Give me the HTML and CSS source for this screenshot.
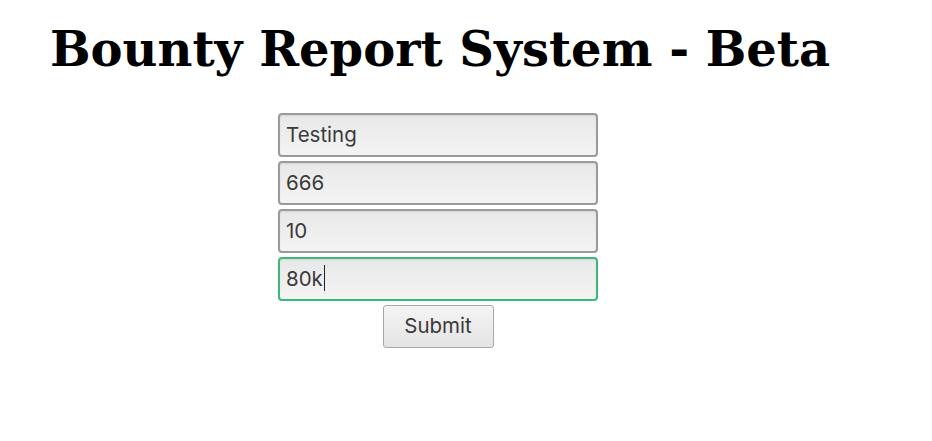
FILE: index.html
```html
<!DOCTYPE html>
<html>
<head>
<meta charset="utf-8">
<title>Bounty Report System - Beta</title>
<link rel="stylesheet" href="styles.css">
</head>
<body>
<h1 class="title">Bounty Report System - Beta</h1>
<form class="form">
  <div class="field">Testing</div>
  <div class="field">666</div>
  <div class="field">10</div>
  <div class="field focused">80k<span class="caret"></span></div>
  <div class="button">Submit</div>
</form>
</body>
</html>
```

FILE: styles.css
```css
html, body {
  margin: 0;
  padding: 0;
  background: #fff;
}
body {
  width: 932px;
  height: 441px;
  overflow: hidden;
}
.title {
  font-family: "DejaVu Serif", serif;
  font-weight: bold;
  font-size: 48px;
  line-height: 56px;
  margin: 21px 0 0 50px;
  color: #000;
}
.form {
  width: 876px;
  display: flex;
  flex-direction: column;
  align-items: center;
  gap: 4px;
  margin-top: 36px;
}
.field {
  box-sizing: border-box;
  width: 320px;
  height: 44px;
  border: 2px solid #9a9a9a;
  border-radius: 4px;
  background: linear-gradient(#e8e8e8, #f4f4f4);
  box-shadow: inset 0 1px 2px rgba(0,0,0,0.08);
  font-family: Inter, "Noto Sans", sans-serif;
  font-size: 20.5px;
  color: #3a3a3a;
  padding: 0 0 2px 6px;
  display: flex;
  align-items: center;
}
.focused {
  border-color: #3cb878;
}
.caret {
  display: inline-block;
  width: 1px;
  height: 26px;
  background: #222;
  margin-left: 1px;
}
.button {
  box-sizing: border-box;
  width: 111px;
  height: 43px;
  border: 1px solid #a8a8a8;
  border-radius: 3px;
  background: linear-gradient(#f4f4f4, #e4e4e4);
  font-family: Inter, "Noto Sans", sans-serif;
  font-size: 20.5px;
  color: #3a3a3a;
  display: flex;
  align-items: center;
  justify-content: center;
  padding-bottom: 2px;
}
```
